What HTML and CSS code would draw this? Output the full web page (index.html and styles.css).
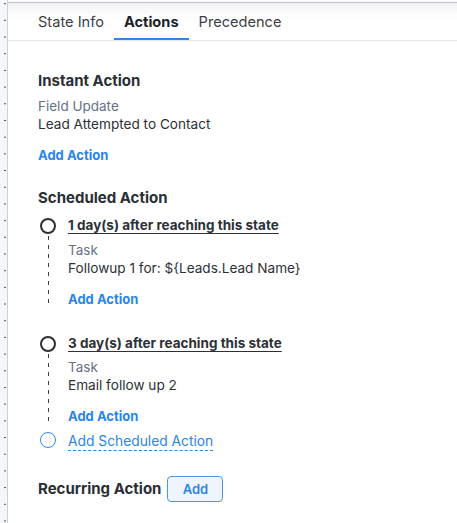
FILE: index.html
```html
<!DOCTYPE html>
<html>
<head>
<meta charset="utf-8">
<link rel="stylesheet" href="styles.css">
</head>
<body>
<div class="frame">
  <div class="gutter"></div>
  <div class="panel">
    <div class="topline"></div>
    <nav class="tabs">
      <div class="tab">State Info</div>
      <div class="tab active">Actions</div>
      <div class="tab">Precedence</div>
    </nav>
    <main class="content">
      <section class="instant">
        <h2 class="heading">Instant Action</h2>
        <div class="label">Field Update</div>
        <div class="value">Lead Attempted to Contact</div>
        <a class="add-link">Add Action</a>
      </section>

      <section class="scheduled">
        <h2 class="heading">Scheduled Action</h2>
        <div class="timeline">
          <div class="t-item">
            <div class="t-rail"><span class="dot"></span><span class="dash"></span></div>
            <div class="t-body">
              <div class="t-title">1 day(s) after reaching this state</div>
              <div class="label t-label">Task</div>
              <div class="value">Followup 1 for: ${Leads.Lead Name}</div>
              <a class="add-link">Add Action</a>
            </div>
          </div>
          <div class="t-item">
            <div class="t-rail"><span class="dot"></span><span class="dash"></span></div>
            <div class="t-body">
              <div class="t-title">3 day(s) after reaching this state</div>
              <div class="label t-label2">Task</div>
              <div class="value">Email follow up 2</div>
              <a class="add-link">Add Action</a>
            </div>
          </div>
          <div class="t-item last">
            <div class="t-rail"><span class="dot blue"></span></div>
            <div class="t-body">
              <a class="add-sched">Add Scheduled Action</a>
            </div>
          </div>
        </div>
      </section>

      <section class="recurring">
        <h2 class="heading inline">Recurring Action</h2>
        <button class="add-btn">Add</button>
      </section>
    </main>
  </div>
</div>
</body>
</html>
```
FILE: styles.css
```css
* { box-sizing: border-box; }
html, body { margin: 0; padding: 0; background: #fff; }
body {
  font-family: "Inter", "Lato", "Liberation Sans", sans-serif;
  color: #2f333a;
  width: 457px;
  height: 523px;
  overflow: hidden;
}
.frame {
  display: flex;
  height: 523px;
}
.gutter {
  width: 8px;
  flex: 0 0 8px;
  background-color: #f4f6fb;
  background-image: radial-gradient(circle, #4a4f58 0.7px, transparent 0.9px);
  background-size: 10px 16.7px;
  background-position: 0px 12px;
  border-right: 1px solid #ccd0d8;
}
.panel {
  flex: 1;
  display: flex;
  flex-direction: column;
}
.topline {
  height: 3px;
  border-bottom: 1px solid #bcc2cc;
  background: #fafafa;
}
.tabs {
  display: flex;
  height: 38px;
  padding-left: 20px;
  padding-top: 2px;
  border-bottom: 1px solid #e6e8ec;
  background: linear-gradient(#f1f1f2 0, #fbfbfb 10px, #fff 16px);
}
.tab {
  padding: 0 10px;
  font-size: 14.6px;
  line-height: 34px;
  color: #3c4048;
  border-bottom: 2px solid transparent;
}
.tab.active {
  font-weight: 700;
  color: #1e2228;
  border-bottom-color: #2f86e8;
}
.content {
  padding: 30px 0 0 30px;
}
.heading {
  margin: 0;
  font-size: 15px;
  line-height: 20px;
  font-weight: 700;
  color: #2a2e35;
}
.label {
  font-size: 13.5px;
  line-height: 18px;
  color: #677086;
}
.instant .label { margin-top: 6px; }
.value {
  font-size: 13.6px;
  line-height: 18px;
  color: #2c3037;
}
.add-link {
  display: block;
  margin-top: 13px;
  font-size: 13px;
  line-height: 18px;
  font-weight: 700;
  color: #2a85ea;
}
.scheduled { margin-top: 24px; }
.timeline { margin-top: 7px; }
.t-item {
  display: flex;
  padding-bottom: 25px;
}
.t-item:nth-child(2) { padding-bottom: 5px; }
.t-item.last { padding-bottom: 0; }
.t-rail {
  width: 30px;
  flex: 0 0 30px;
  display: flex;
  flex-direction: column;
  align-items: flex-start;
  padding-left: 2px;
}
.dot {
  width: 16px;
  height: 16px;
  margin-top: 3px;
  border-radius: 50%;
  border: 2px solid #2c2f35;
  flex: 0 0 16px;
}
.dot.blue {
  margin-top: 2px;
  border: 1.3px solid #2f86e8;
}
.dash {
  flex: 1;
  width: 1px;
  margin-left: 8px;
  margin-top: 2px;
  background: repeating-linear-gradient(#3a3d44 0 4px, transparent 4px 9px);
}
.t-body { flex: 1; }
.t-title {
  font-size: 13.5px;
  line-height: 20px;
  font-weight: 700;
  color: #2c3037;
  text-decoration: underline;
  text-underline-offset: 3px;
  text-decoration-thickness: 1px;
}
.t-label { margin-top: 6px; }
.t-label2 { margin-top: 5px; }
.add-sched {
  display: inline-block;
  font-size: 13.8px;
  color: #2a85ea;
  border-bottom: 1px dashed #2a85ea;
  line-height: 17px;
  margin-top: 0;
}
.recurring {
  margin-top: 25px;
  display: flex;
  align-items: center;
  gap: 6px;
}
.add-btn {
  width: 56px;
  height: 26px;
  font-family: inherit;
  font-size: 13px;
  font-weight: 600;
  color: #2a85ea;
  background: #eef5fe;
  border: 1px solid #4b95ea;
  border-radius: 4px;
  padding: 0;
}
```
